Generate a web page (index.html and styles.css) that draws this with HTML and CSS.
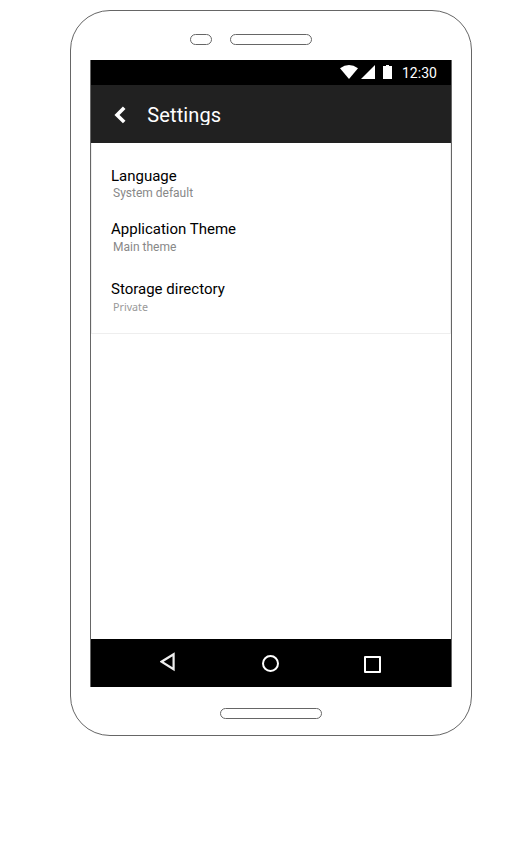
FILE: index.html
```html
<!DOCTYPE html>
<html lang="en">
<head>
<meta charset="utf-8">
<title>Settings</title>
<link rel="stylesheet" href="styles.css">
</head>
<body>
<div class="phone">
  <div class="phone-top"><span class="sensor"></span><span class="speaker"></span></div>
  <main class="screen">
    <div class="status-bar">
      <svg class="wifi" width="18" height="14" viewBox="0 0 18 14"><path d="M0 3.2Q9-3.2 18 3.2L9 14Z"/></svg>
      <svg class="signal" width="14" height="14" viewBox="0 0 14 14"><path d="M14 0V14H0Z"/></svg>
      <svg class="battery" width="9" height="14" viewBox="0 0 9 14"><path d="M0 1H3V0H6V1H9V14H0Z"/></svg>
      <span class="clock">12:30</span>
    </div>
    <header class="app-bar">
      <svg class="back" width="12" height="18" viewBox="0 0 12 18"><path d="M10.2 1.7 3 8.9 10.2 16.1"/></svg>
      <h1 class="title">Settings</h1>
    </header>
    <section class="settings">
      <div class="item"><div class="label">Language</div><div class="value">System default</div></div>
      <div class="item theme"><div class="label">Application Theme</div><div class="value">Main theme</div></div>
      <div class="item storage"><div class="label">Storage directory</div><div class="value small">Private</div></div>
    </section>
    <nav class="nav-bar">
      <svg class="nav-back" width="16" height="20" viewBox="0 0 16 20"><path d="M13.6 2.2V17.2L1.5 9.7Z"/></svg>
      <span class="nav-home"></span>
      <span class="nav-recent"></span>
    </nav>
  </main>
  <div class="home-button"></div>
</div>
</body>
</html>
```

FILE: styles.css
```css
* { box-sizing: border-box; }
body { margin: 0; background: #fff; font-family: Roboto, sans-serif; }
.phone {
  width: 402px; height: 726px; margin: 10px 0 0 70px;
  border: 1px solid #666; border-radius: 40px;
  display: flex; flex-direction: column; align-items: center;
}
.phone-top { width: 100%; height: 49px; padding: 23px 0 0 119px; display: flex; gap: 18px; }
.sensor, .speaker, .home-button { height: 11px; border: 1px solid #666; border-radius: 5.5px; }
.sensor { width: 22px; }
.speaker { width: 82px; }
.screen {
  width: 362px; height: 627px; display: flex; flex-direction: column;
  border: solid #666; border-width: 0 1px;
}
.status-bar { height: 25px; flex: none; background: #000; display: flex; padding: 5px 0 0 249px; }
.status-bar svg { fill: #fff; flex: none; }
.signal { margin-left: 3px; }
.battery { margin-left: 8px; }
.clock { margin-left: 10px; color: #fff; font-size: 14px; line-height: 16px; white-space: nowrap; }
.app-bar { height: 58px; flex: none; background: #212121; display: flex; padding-left: 23px; }
.back { margin-top: 21px; fill: none; stroke: #fff; stroke-width: 3.6; }
.title { margin: 18px 0 0 21.3px; height: 22px; overflow: hidden; color: #fff; font-size: 20px; font-weight: 400; line-height: 24px; letter-spacing: .12px; }
.settings { height: 191px; flex: none; border: solid #eee; border-width: 0 1px 1px; padding: 23px 0 0 19px; }
.theme { margin-top: 17px; }
.storage { margin-top: 24px; }
.label { color: #000; font-size: 15px; line-height: 20px; height: 19px; }
.value { margin-left: 2px; color: #888; font-size: 12px; line-height: 16px; height: 17px; }
.theme .value { padding-top: 1px; }
.small { font-family: "Noto Sans", sans-serif; font-size: 10.7px; padding-top: 1px; color: #999; }
.nav-bar { height: 48px; flex: none; margin-top: auto; background: #000; display: flex; padding-left: 69px; }
.nav-back { margin-top: 13px; fill: none; stroke: #eee; stroke-width: 2.2; }
.nav-home { width: 17px; height: 17px; margin: 16px 0 0 86px; border: 2px solid #fff; border-radius: 50%; }
.nav-recent { width: 17px; height: 17px; margin: 17px 0 0 85px; border: 2px solid #fff; border-radius: 1px; }
.home-button { width: 102px; margin-top: 21px; }
```
